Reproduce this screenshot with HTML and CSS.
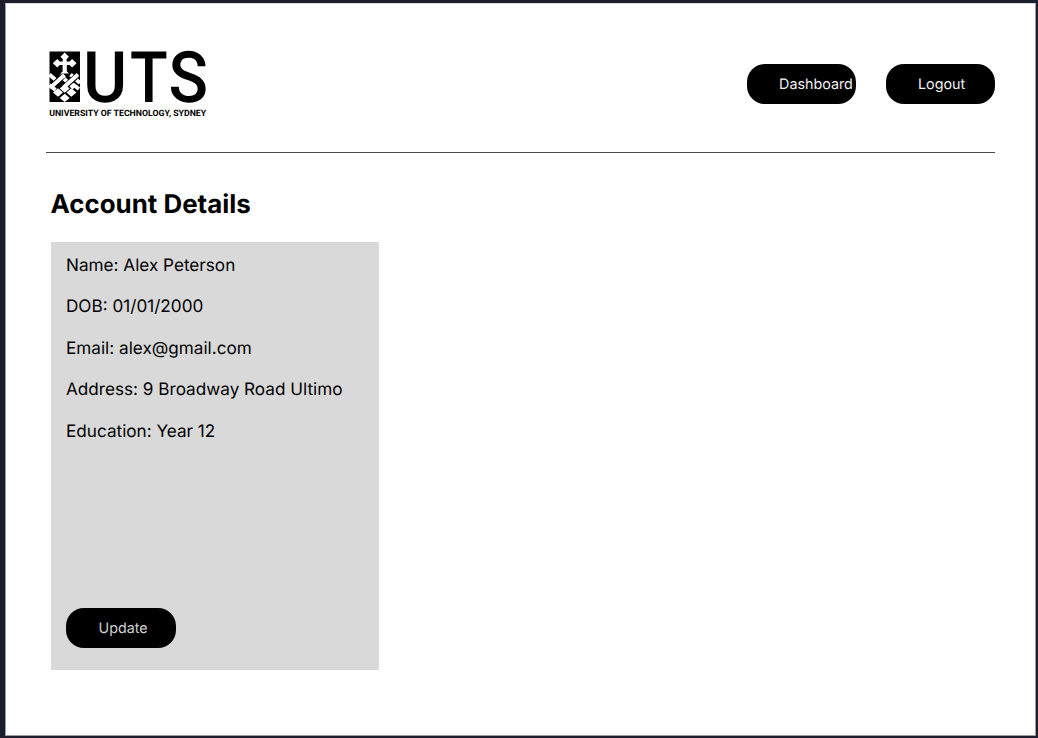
FILE: index.html
```html
<!DOCTYPE html>
<html lang="en">
<head>
<meta charset="utf-8">
<title>Account Details</title>
<link rel="stylesheet" href="styles.css">
</head>
<body>
<div class="page">
  <header class="header">
    <svg class="logo" viewBox="0 0 162 72" role="img" aria-label="UTS">
      <rect x="3.500" y="4.500" width="30.500" height="50.500"/>
      <g class="crest-fill">
        <path d="M18.700 5.500l4.200 4.200-2.300 2.500v2.300h3l2.500-2.500 4.500 4.200-4.500 4.200-2.500-2.500h-2.800v6.500l2.300 2.100h-8.800l2.300-2.100v-6.500h-2.800l-2.500 2.500-4.500-4.200 4.500-4.200 2.500 2.500h3v-2.300l-2.300-2.500z"/>
        <path d="M18.700 46.700l5 4.200-5 4.200-5-4.200z"/>
        <path d="M12 41.300l5 4.200-5 4.200-5-4.200zM25.400 41.300l5 4.200-5 4.200-5-4.200zM18.700 37.300l5 4.200-5 4.200-5-4.200z"/>
      </g>
      <g class="crest-weave">
        <path d="M3.500 27.500l9 8M14 28l14 13M24.500 27.500l9.500 8.500M3.500 38l6 5M25 36l8 6"/>
        <path class="crest-gap" d="M7 38.200l10-9M20.500 38.200l9.500-8.500"/>
        <path d="M4 41l14.500-13M17.500 40.500l14.500-13"/>
      </g>
      <text class="logo-letters" x="37" y="54.500" textLength="44.200" lengthAdjust="spacingAndGlyphs">U</text>
      <text class="logo-letters" x="84" y="54.500" textLength="37.700" lengthAdjust="spacingAndGlyphs">T</text>
      <text class="logo-letters" x="122.500" y="54.500" textLength="39.500" lengthAdjust="spacingAndGlyphs">S</text>
      <text class="logo-caption" x="3.200" y="68.700" textLength="157" lengthAdjust="spacingAndGlyphs">UNIVERSITY OF TECHNOLOGY, SYDNEY</text>
    </svg>
    <nav class="nav">
      <a class="button">Dashboard</a>
      <a class="button">Logout</a>
    </nav>
  </header>
  <main class="content">
    <h1 class="title">Account Details</h1>
    <section class="card">
      <div class="details">
        <p class="detail">Name: Alex Peterson</p>
        <p class="detail">DOB: 01/01/2000</p>
        <p class="detail">Email: alex@gmail.com</p>
        <p class="detail">Address: 9 Broadway Road Ultimo</p>
        <p class="detail">Education: Year 12</p>
      </div>
      <a class="button button-muted">Update</a>
    </section>
  </main>
</div>
</body>
</html>
```
FILE: styles.css
```css
* {
  box-sizing: border-box;
}

body {
  margin: 0;
  height: 738px;
  padding: 3px 2px 2px 5px;
  background: #1c1e2b;
  font-family: Inter, sans-serif;
  color: #000;
  text-rendering: geometricPrecision;
}

.page {
  height: 733px;
  padding: 44px 40px 0 40px;
  background: #fff;
  border: 1px solid #9b9ba1;
  border-top-color: #d9d9dd;
}

.header {
  display: flex;
  justify-content: space-between;
  align-items: flex-start;
  height: 105px;
  border-bottom: 1px solid #4c4c4c;
}

.logo {
  width: 162px;
  height: 72px;
  margin-top: -1px;
  overflow: visible;
}

.crest-fill {
  fill: #fff;
}

.crest-weave {
  fill: none;
  stroke: #fff;
  stroke-width: 3.800;
}

.crest-gap {
  stroke: #000;
  stroke-width: 5.600;
}

.logo-letters {
  font: 500 71px Roboto, sans-serif;
}

.logo-caption {
  font: 700 8.700px Roboto, sans-serif;
}

.nav {
  display: flex;
  gap: 29.400px;
  padding-top: 16px;
}

.button {
  display: block;
  width: 109.500px;
  height: 40px;
  padding-left: 32.500px;
  border-radius: 18px;
  background: #000;
  color: #f2f2f2;
  font-size: 14.300px;
  line-height: 41px;
  white-space: nowrap;
}

.button-muted {
  color: #d0d0d0;
}

.content {
  padding-left: 4.500px;
}

.title {
  margin: 35px 0 0;
  font-size: 25.900px;
  font-weight: 700;
  line-height: 34px;
}

.card {
  display: flex;
  flex-direction: column;
  justify-content: space-between;
  width: 328.500px;
  height: 428px;
  margin-top: 20px;
  padding: 12.800px 15.500px 22px;
  background: #d9d9d9;
}

.details {
  display: flex;
  flex-direction: column;
  gap: 19.450px;
}

.detail {
  margin: 0;
  font-size: 17.150px;
  line-height: 22px;
  white-space: nowrap;
}
```
